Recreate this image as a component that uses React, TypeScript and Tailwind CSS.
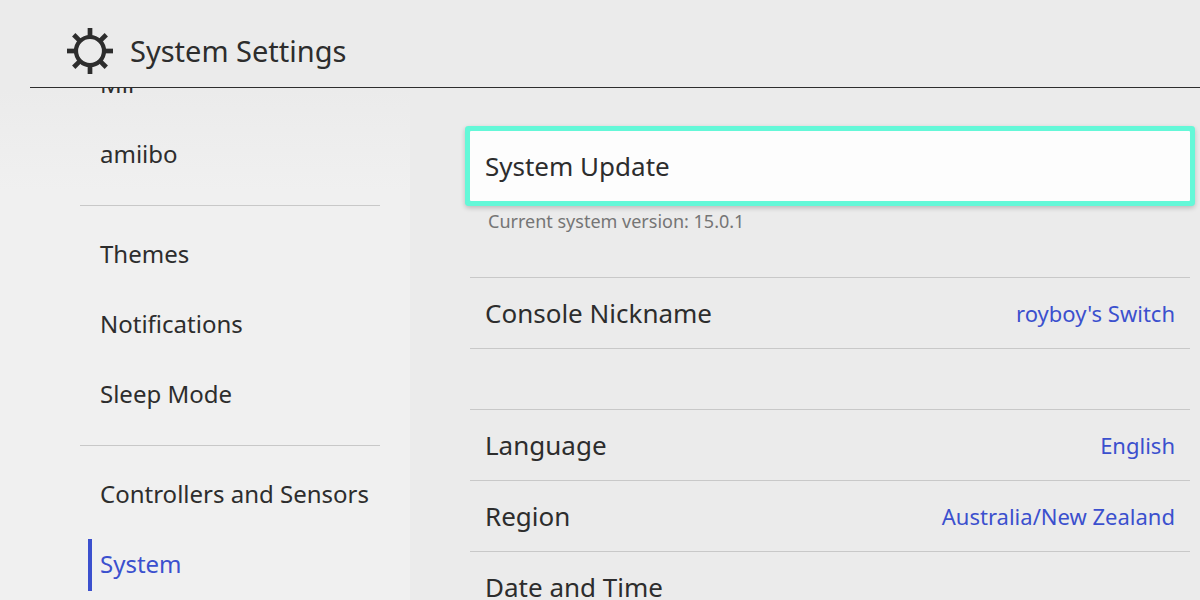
import { useState } from "react";
import clsx from "clsx";

const menuGroups = [
  ["Mii", "amiibo"],
  ["Themes", "Notifications", "Sleep Mode"],
  ["Controllers and Sensors", "System"],
];

const localeSettings = [
  { label: "Language", value: "English" },
  { label: "Region", value: "Australia/New Zealand" },
  { label: "Date and Time", value: "" },
];

const spokes = [0, 45, 90, 135, 180, 225, 270, 315];

function SettingsIcon() {
  return (
    <svg viewBox="0 0 48 48" className="size-12" fill="none" stroke="currentColor" aria-hidden="true">
      <circle cx="24" cy="24" r="14" strokeWidth="4.2" />
      {spokes.map((angle) => (
        <path key={angle} d="M24 9V1" strokeWidth="4.7" transform={`rotate(${angle} 24 24)`} />
      ))}
    </svg>
  );
}

function SettingRow({ label, value }: { label: string; value: string }) {
  return (
    <button
      type="button"
      className="flex h-[71px] w-full items-center justify-between border-t border-[#c8c8c8] px-[15px] text-left"
    >
      <span className="text-[26px] leading-9">{label}</span>
      <span className="text-[22px] leading-8 text-[#3b50ce]">{value}</span>
    </button>
  );
}

export default function App() {
  const [selected, setSelected] = useState("System");

  return (
    <div className="flex h-screen flex-col overflow-hidden bg-[#ebebeb] font-['Noto_Sans','Open_Sans',sans-serif] text-[#2d2d2d]">
      {/* Header */}
      <header className="ml-[30px] flex h-[88px] shrink-0 items-center gap-4 border-b border-[#2d2d2d] pt-4 pb-0.5 pl-9">
        <SettingsIcon />
        <h1 className="text-[29px] leading-10">System Settings</h1>
      </header>

      <div className="flex min-h-0 flex-1">
        {/* Sidebar, scrolled part of the way down */}
        <nav className="w-[410px] shrink-0 overflow-hidden bg-linear-to-b from-[#ebebeb] to-[#f0f0f0] to-20% pr-[30px] pl-20">
          <div className="-mt-[38px]">
            {menuGroups.map((group, index) => (
              <div key={index}>
                {index > 0 && <hr className="mt-[15px] mb-[14px] border-[#c8c8c8]" />}
                {group.map((item) => (
                  <button
                    key={item}
                    type="button"
                    onClick={() => setSelected(item)}
                    className="flex h-[70px] w-full items-center pl-2 text-left"
                  >
                    <span
                      className={clsx(
                        "flex h-[52px] items-center border-l-4 pb-0.5 pl-2 text-2xl",
                        item === selected ? "border-[#3b50ce] text-[#3b50ce]" : "border-transparent"
                      )}
                    >
                      {item}
                    </span>
                  </button>
                ))}
              </div>
            ))}
          </div>
        </nav>

        {/* Settings list */}
        <main className="min-w-0 flex-1 pt-[43px] pr-[10px] pl-[60px]">
          <button
            type="button"
            className="flex h-[70px] w-full items-center rounded-[1px] bg-[#fdfdfd] px-[15px] text-left text-[26px] leading-9 shadow-[0_2px_5px_5px_rgba(0,0,0,0.2)] ring-5 ring-[#64f8d8]"
          >
            System Update
          </button>
          <p className="mt-[5px] mb-[41px] px-[18px] text-lg leading-[30px] text-[#757575]">
            Current system version: 15.0.1
          </p>

          <div className="mb-[60px] border-b border-[#c8c8c8]">
            <SettingRow label="Console Nickname" value="royboy's Switch" />
          </div>

          <div>
            {localeSettings.map((setting) => (
              <SettingRow key={setting.label} label={setting.label} value={setting.value} />
            ))}
          </div>
        </main>
      </div>
    </div>
  );
}
